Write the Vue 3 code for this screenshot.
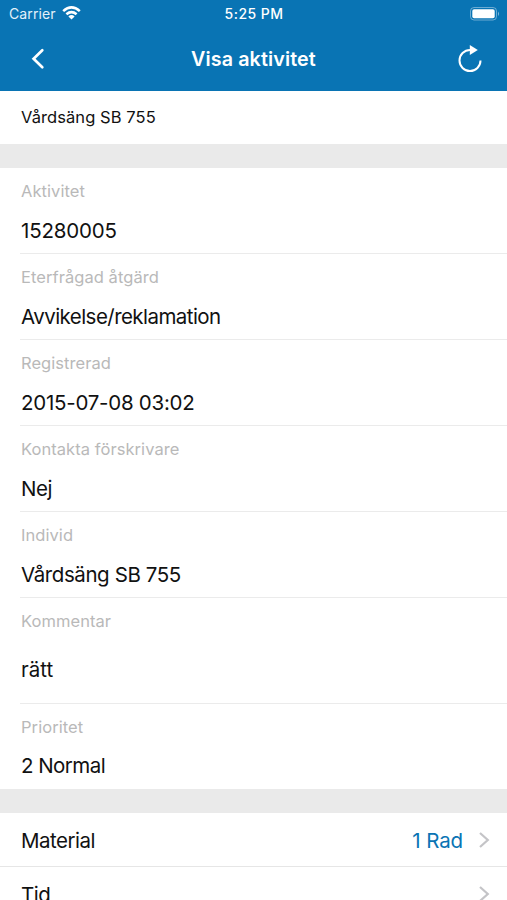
<script setup>
const fields = [
  { label: 'Aktivitet', value: '15280005', tracking: -0.2 },
  { label: 'Eterfrågad åtgärd', value: 'Avvikelse/reklamation', tracking: -0.55 },
  { label: 'Registrerad', value: '2015-07-08 03:02', tracking: -0.25 },
  { label: 'Kontakta förskrivare', value: 'Nej', tracking: -0.4 },
  { label: 'Individ', value: 'Vårdsäng SB 755', tracking: -0.41 },
  { label: 'Kommentar', value: 'rätt', tracking: 0, tall: true },
  { label: 'Prioritet', value: '2 Normal', tracking: -0.55 },
]
const links = [
  { name: 'Material', detail: '1 Rad' },
  { name: 'Tid', detail: '' },
]
</script>

<template>
  <div class="screen">
    <header class="header">
      <div class="status">
        <div class="carrier">
          <span>Carrier</span>
          <svg width="19" height="15" viewBox="0 0 19 15">
            <path d="M9.5 14.6 6.4 11.4Q9.5 8.8 12.6 11.4Z" fill="#fff" />
            <path d="M4.4 9.2Q9.5 5 14.6 9.2M1.2 6.1Q9.5-1.3 17.8 6.1" fill="none" stroke="#fff" stroke-width="2.6" />
          </svg>
        </div>
        <span class="clock">5:25 PM</span>
        <svg class="battery" width="30" height="14" viewBox="0 0 30 14">
          <rect x=".5" y=".5" width="26" height="12.5" rx="3.5" fill="none" stroke="#fff" stroke-opacity=".4" />
          <rect x="2.3" y="2.3" width="22.4" height="9" rx="1.8" fill="#fff" />
          <path d="M28 4.5Q30 6.8 28 9Z" fill="#fff" fill-opacity=".5" />
        </svg>
      </div>
      <div class="nav">
        <svg width="14" height="22" viewBox="0 0 14 22"><path d="m11.3 2.2-8.7 8.5 8.7 8.5" fill="none" stroke="#fff" stroke-width="2.7" stroke-linecap="round" /></svg>
        <h1>Visa aktivitet</h1>
        <svg width="26" height="28" viewBox="0 0 26 28">
          <path d="M13 5A10.5 10.5 0 1 0 23.5 15.5" fill="none" stroke="#fff" stroke-width="2" />
          <path d="m12.8 0 8 5-8 5Z" fill="#fff" />
        </svg>
      </div>
    </header>
    <div class="title">Vårdsäng SB 755</div>
    <div class="band"></div>
    <main>
      <section v-for="f in fields" :key="f.label" class="field" :class="{ tall: f.tall }">
        <div class="label">{{ f.label }}</div>
        <div class="value" :style="{ letterSpacing: f.tracking + 'px' }">{{ f.value }}</div>
      </section>
    </main>
    <div class="band lower"></div>
    <nav>
      <div v-for="l in links" :key="l.name" class="link">
        <span class="name">{{ l.name }}</span>
        <span class="detail">{{ l.detail }}</span>
        <svg width="12" height="18" viewBox="0 0 12 18"><path d="m2 2 7.8 7L2 16" fill="none" stroke="#c4c4c7" stroke-width="2.2" /></svg>
      </div>
    </nav>
  </div>
</template>

<style>
body { margin: 0; overflow: hidden; background: #fff; }
</style>
<style scoped>
.screen { height: 900px; overflow: hidden; font-family: Inter, sans-serif; color: #111; background: #fff; display: flex; flex-direction: column; }
.screen > * { flex-shrink: 0; }
.header { height: 91px; background: #0974b4; color: #fff; }
.status { height: 27px; display: grid; grid-template-columns: 1fr auto 1fr; align-items: center; padding: 0 8px 0 9px; font-size: 14px; }
.carrier { display: flex; align-items: center; gap: 6px; color: #e3f1fa; letter-spacing: .1px; }
.carrier svg { margin-top: -2px; }
.clock { font-weight: 500; font-size: 14px; letter-spacing: .45px; }
.battery { justify-self: end; margin-right: -1px; }
.nav { height: 64px; display: flex; align-items: center; justify-content: space-between; padding: 0 24px 0 31px; }
h1 { margin: 0 0 0 5px; font-size: 19.7px; font-weight: 600; letter-spacing: .12px; }
.title { height: 53px; line-height: 53px; padding-left: 21px; font-size: 16.5px; letter-spacing: .08px; }
.band { height: 24px; background: #eaeaea; }
.lower { margin-top: -1px; }
.field { height: 86px; box-sizing: border-box; margin-left: 20px; padding-left: 1px; border-bottom: 1px solid #ebebeb; padding-top: 12px; }
.field.tall { height: 106px; }
.field:last-child { border: 0; }
.label { height: 24px; line-height: 23px; font-size: 16.5px; letter-spacing: .06px; color: #b9b9b9; }
.value { margin-top: 13px; line-height: 28px; font-size: 20.5px; }
.tall .value { margin-top: 22px; }
.field:last-child .label { line-height: 22px; }
.field:last-child .value { margin-top: 12px; }
.link { height: 54px; box-sizing: border-box; display: flex; align-items: center; padding: 1px 17px 0 21px; border-bottom: 1px solid #e6e6e6; font-size: 20.5px; }
.name { letter-spacing: -.5px; }
.detail { margin-left: auto; margin-right: 15px; color: #0974b4; letter-spacing: -.1px; }
</style>
